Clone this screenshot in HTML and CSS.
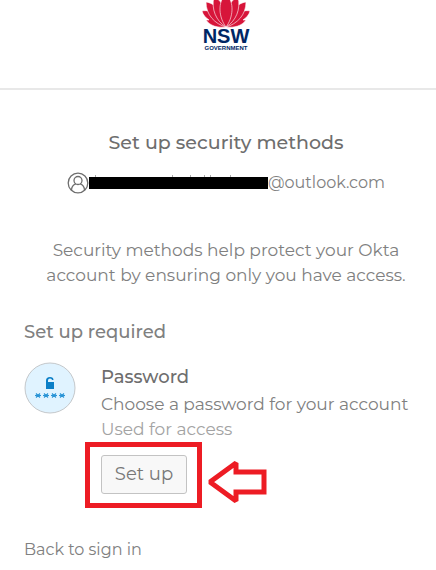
FILE: index.html
```html
<!DOCTYPE html>
<html lang="en">
<head>
    <meta charset="UTF-8">
    <meta name="viewport" content="width=device-width, initial-scale=1.0">
    <title>Set up security methods</title>
    <link rel="stylesheet" href="styles.css">
</head>
<body>

    <header class="auth-header">
        <!-- NSW Government logo -->
        <svg class="logo" viewBox="0 0 48 52" role="img" aria-label="NSW Government">
            <g fill="#d7153a" stroke="#fff" stroke-width="0.6">
                <path d="M0 11 C4 10 9 11 13 14 L24 27 C16 28 8 26 4 20 L7 20 C4 18 1 15 0 11Z"/>
                <path d="M48 11 C44 10 39 11 35 14 L24 27 C32 28 40 26 44 20 L41 20 C44 18 47 15 48 11Z"/>
                <path d="M4 2 C12 3 20 10 24 27 C13 24 4 15 4 2Z"/>
                <path d="M44 2 C36 3 28 10 24 27 C35 24 44 15 44 2Z"/>
                <path d="M12 -3 C20 0 25 10 24 27 C14 21 9 9 12 -3Z"/>
                <path d="M36 -3 C28 0 23 10 24 27 C34 21 39 9 36 -3Z"/>
                <path d="M24 -6 C33 2 31 18 24 27 C17 18 15 2 24 -6Z"/>
            </g>
            <text class="logo-name" x="24" y="43" text-anchor="middle">NSW</text>
            <text class="logo-gov" x="24" y="50" text-anchor="middle">GOVERNMENT</text>
        </svg>
    </header>

    <main class="auth-content">
        <h1>Set up security methods</h1>
        <div class="identifier">
            <svg class="user-icon" viewBox="0 0 22 22" fill="none" stroke="#6e6e6e" stroke-width="1.3" aria-hidden="true">
                <circle cx="11" cy="11" r="9.8"/>
                <circle cx="11" cy="8.5" r="4"/>
                <path d="M4.5 18 C4.700 14.500 6.500 12.700 8.800 11.900 M17.500 18 C17.300 14.500 15.500 12.700 13.200 11.900"/>
            </svg>
            <!-- User name is blacked out, only the tall strokes show above the bar -->
            <svg class="redacted" viewBox="0 0 179 18" aria-hidden="true">
                <path d="M6.500 1 V4 M83.500 1 V4 M101.500 1 V4 M115.500 1 V4 M121.500 1 V4 M141.500 1 V4" stroke="#aaa"/>
                <rect y="3" width="179" height="12"/>
            </svg>
            <span>@outlook.com</span>
        </div>
        <p class="subtitle">Security methods help protect your Okta account by ensuring only you have access.</p>

        <h2>Set up required</h2>
        <div class="authenticator">
            <svg class="password-icon" viewBox="0 0 52 52" aria-hidden="true">
                <circle cx="26" cy="26" r="25" fill="#e0f3ff" stroke="#c4c8cb"/>
                <path fill="#0b7fc7" d="M22 20 V18.500 Q22 15 26 15 Q29.500 15 29.500 18 H28 Q28 16.500 26 16.500 Q24 16.500 24 18.500 V20 H30 V27 H22Z"/>
                <g stroke="#2a94d6" stroke-width="1.2">
                    <path id="star" d="M11 33.500 H17 M12 31.500 L16 35.500 M16 31.500 L12 35.500"/>
                    <use href="#star" x="8"/>
                    <use href="#star" x="16"/>
                    <use href="#star" x="24"/>
                </g>
            </svg>
            <div class="authenticator-info">
                <h3>Password</h3>
                <p>Choose a password for your account</p>
                <p class="usage">Used for access</p>
                <div class="action">
                    <button type="button" class="setup-button">Set up</button>
                    <!-- Highlight around the button -->
                    <span class="highlight"></span>
                    <svg class="arrow" viewBox="0 0 60 46" aria-hidden="true">
                        <path d="M3 23 L29 4 V13 H57 V33 H29 V42 Z" fill="none" stroke="#ed1c24" stroke-width="5" stroke-miterlimit="1.5"/>
                    </svg>
                </div>
            </div>
        </div>

        <a class="back-link" href="#">Back to sign in</a>
    </main>

</body>
</html>
```

FILE: styles.css
```css
/* Global styling */
body {
    font-family: Montserrat, Inter, sans-serif;
    font-size: 17px;
    line-height: 25px;
    color: #808080;
    background-color: #fff;
    margin: 0;
}

h1, h2, h3, p {
    margin: 0;
}

/* Header with the logo */
.auth-header {
    display: flex;
    justify-content: center;
    height: 88px;
    padding: 0 8px 0 24px;
    border-bottom: 2px solid #e8e8e8;
}

.logo {
    width: 48px;
    height: 52px;
}

.logo-name {
    font: bold 20px "Liberation Sans", sans-serif;
    fill: #002664;
}

.logo-gov {
    font: bold 6px "Liberation Sans", sans-serif;
    fill: #002664;
}

/* Main column */
.auth-content {
    padding: 40px 8px 8px 24px;
}

h1 {
    font-size: 19px;
    font-weight: 500;
    color: #6e6e6e;
    text-align: center;
}

.identifier {
    display: flex;
    justify-content: center;
    align-items: center;
    margin-top: 15px;
    font-size: 16px;
}

.user-icon {
    width: 22px;
    height: 22px;
}

.redacted {
    width: 179px;
    height: 18px;
}

.subtitle {
    margin-top: 43px;
    text-align: center;
}

h2 {
    margin-top: 32px;
    font-size: 18px;
    font-weight: 500;
}

/* Authenticator row */
.authenticator {
    display: flex;
    gap: 25px;
    margin-top: 17px;
}

.password-icon {
    width: 52px;
    height: 52px;
    flex-shrink: 0;
}

h3 {
    font-size: 18px;
    font-weight: 500;
    line-height: 30px;
    color: #6e6e6e;
}

.usage {
    color: #a3a3a3;
}

.action {
    position: relative;
    margin-top: 13px;
}

.setup-button {
    display: block;
    width: 86px;
    height: 39px;
    padding: 0;
    font: inherit;
    font-size: 18px;
    color: #777;
    background-color: #f8f8f8;
    border: 1px solid #c3c3c3;
    border-radius: 3px;
    cursor: pointer;
}

.highlight {
    position: absolute;
    top: -13px;
    left: -16px;
    width: 107px;
    height: 56px;
    border: 5px solid #ed1c24;
}

.arrow {
    position: absolute;
    top: 4px;
    left: 106px;
    width: 60px;
    height: 46px;
}

.back-link {
    display: inline-block;
    margin-top: 43px;
    font-size: 16px;
    color: #808080;
    text-decoration: none;
}
```
